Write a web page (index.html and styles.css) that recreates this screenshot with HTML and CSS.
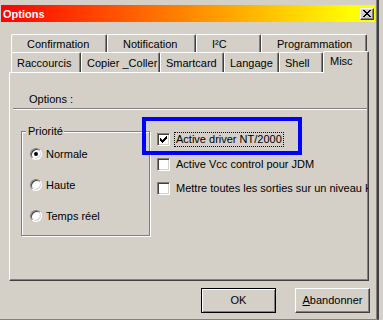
FILE: index.html
```html
<!DOCTYPE html>
<html>
<head>
<meta charset="utf-8">
<link rel="stylesheet" href="styles.css">
</head>
<body>
<div class="window">
  <div class="titlebar">
    <span class="title">Options</span>
    <span class="close">
      <svg width="8" height="7" viewBox="0 0 8 7" shape-rendering="crispEdges">
        <rect x="0" y="0" width="2" height="1"/><rect x="6" y="0" width="2" height="1"/>
        <rect x="1" y="1" width="2" height="1"/><rect x="5" y="1" width="2" height="1"/>
        <rect x="2" y="2" width="4" height="1"/>
        <rect x="3" y="3" width="2" height="1"/>
        <rect x="2" y="4" width="4" height="1"/>
        <rect x="1" y="5" width="2" height="1"/><rect x="5" y="5" width="2" height="1"/>
        <rect x="0" y="6" width="2" height="1"/><rect x="6" y="6" width="2" height="1"/>
      </svg>
    </span>
  </div>
  <div class="client">
    <div class="tabstrip">
      <div class="tabrow back">
        <div class="tab t-confirm">Confirmation</div>
        <div class="tab t-notif">Notification</div>
        <div class="tab t-i2c">I²C</div>
        <div class="tab t-prog">Programmation</div>
      </div>
      <div class="tabrow front">
        <div class="tab t-racc">Raccourcis</div>
        <div class="tab t-copier">Copier _Coller</div>
        <div class="tab t-smart">Smartcard</div>
        <div class="tab t-lang">Langage</div>
        <div class="tab t-shell">Shell</div>
        <div class="tab t-misc sel">Misc</div>
      </div>
    </div>
    <div class="panel">
      <div class="opt-label">Options :</div>
      <div class="sep"></div>
      <div class="pbody">
        <div class="group">
          <span class="legend">Priorité</span>
          <div class="radio"><span class="rb on"></span><span class="rtext">Normale</span></div>
          <div class="radio"><span class="rb"></span><span class="rtext">Haute</span></div>
          <div class="radio"><span class="rb"></span><span class="rtext">Temps réel</span></div>
        </div>
        <div class="checks">
          <div class="check">
            <span class="cb">
              <svg width="7" height="7" viewBox="0 0 7 7" shape-rendering="crispEdges">
                <rect x="6" y="0" width="1" height="1"/>
                <rect x="5" y="1" width="2" height="1"/>
                <rect x="0" y="2" width="1" height="1"/><rect x="4" y="2" width="3" height="1"/>
                <rect x="0" y="3" width="2" height="1"/><rect x="3" y="3" width="3" height="1"/>
                <rect x="0" y="4" width="5" height="1"/>
                <rect x="1" y="5" width="3" height="1"/>
                <rect x="2" y="6" width="1" height="1"/>
              </svg>
            </span>
            <span class="ctext focus">Active driver NT/2000</span>
          </div>
          <div class="check c2"><span class="cb"></span><span class="ctext">Active Vcc control pour JDM</span></div>
          <div class="check c3"><span class="cb"></span><span class="ctext">Mettre toutes les sorties sur un niveau H</span></div>
        </div>
      </div>
    </div>
    <div class="buttons">
      <div class="btn default">OK</div>
      <div class="btn"><u>A</u>bandonner</div>
    </div>
  </div>
  <div class="highlight"></div>
</div>
</body>
</html>
```

FILE: styles.css
```css
html, body {
  margin: 0;
  padding: 0;
}
body {
  background: #d4d0c8;
  font-family: "Liberation Sans", Arial, sans-serif;
  font-size: 11px;
  line-height: 13px;
  color: #000;
  width: 383px;
  height: 320px;
  overflow: hidden;
}
.window {
  position: relative;
  box-sizing: border-box;
  width: 379px;
  height: 320px;
  padding-top: 5px;
  border-right: 2px solid #404040;
  border-bottom: 1px solid #808080;
  box-shadow: inset -1px 0 0 #808080;
  background: #d4d0c8;
}
.titlebar {
  height: 17px;
  margin: 0 2px 0 1px;
  display: flex;
  align-items: center;
  justify-content: space-between;
  background: linear-gradient(90deg, #ff0000 0%, #ffff00 94%, #ffff00 100%);
}
.title {
  color: #fff;
  font-weight: bold;
  padding-left: 2px;
  padding-top: 1px;
}
.close {
  box-sizing: border-box;
  width: 14px;
  height: 12px;
  margin-right: 1px;
  background: #d4d0c8;
  border: 1px solid;
  border-color: #fff #404040 #404040 #fff;
  box-shadow: inset -1px -1px 0 #808080;
  display: flex;
  align-items: center;
  justify-content: center;
}
.close svg {
  fill: #000;
  display: block;
  margin-left: -1px;
}
.client {
  padding-left: 9px;
}
.tabstrip {
  margin-top: 12px;
  margin-left: 2px;
}
.tabrow {
  display: flex;
}
.tabrow.back {
  height: 17px;
}
.tabrow.front {
  height: 21px;
  align-items: flex-end;
}
.tab {
  box-sizing: border-box;
  flex: none;
  white-space: nowrap;
  background: #d4d0c8;
  border-top: 1px solid #fff;
  border-left: 1px solid #fff;
  border-right: 1px solid #404040;
  box-shadow: inset -1px 0 0 #808080;
  border-radius: 2px 2px 0 0;
}
.back .tab {
  height: 18px;
  padding: 3px 0 0 15px;
}
.front .tab {
  height: 20px;
  padding: 4px 0 0 5px;
}
.front .tab.sel {
  position: relative;
  z-index: 1;
  height: 22px;
  margin-bottom: -1px;
  padding: 3px 0 0 6px;
}
.t-confirm { width: 96px; }
.t-notif { width: 89px; }
.t-i2c { width: 65px; }
.t-prog { width: 106px; }
.t-racc { width: 70px; }
.t-copier { width: 79px; }
.t-smart { width: 64px; }
.t-lang { width: 55px; }
.t-shell { width: 44px; }
.t-misc { width: 46px; }

.panel {
  box-sizing: border-box;
  width: 360px;
  height: 209px;
  border-top: 1px solid #fff;
  border-left: 1px solid #fff;
  border-right: 1px solid #404040;
  border-bottom: 1px solid #404040;
  box-shadow: inset -1px -1px 0 #808080;
  overflow: hidden;
}
.opt-label {
  margin: 20px 0 0 19px;
}
.sep {
  margin: 2px 1px 0 3px;
  border-top: 1px solid #808080;
  border-bottom: 1px solid #fff;
}
.pbody {
  display: flex;
  align-items: flex-start;
}
.group {
  position: relative;
  box-sizing: border-box;
  flex: none;
  width: 129px;
  height: 105px;
  margin: 21px 0 0 11px;
  padding: 15px 0 0 8px;
  border: 1px solid #808080;
  box-shadow: inset 1px 1px 0 #fff, 1px 1px 0 #fff;
}
.legend {
  position: absolute;
  top: -7px;
  left: 4px;
  padding: 0 1px 0 2px;
  background: #d4d0c8;
}
.radio {
  display: flex;
  align-items: center;
  height: 14px;
}
.radio + .radio {
  margin-top: 17px;
}
.rb {
  position: relative;
  box-sizing: border-box;
  flex: none;
  width: 12px;
  height: 12px;
  border-radius: 50%;
  background: #fff;
  border: 1px solid;
  border-color: #808080 #fff #fff #808080;
  box-shadow: inset 1px 1px 0 #404040, inset -1px -1px 0 #d4d0c8;
}
.rb.on::after {
  content: "";
  position: absolute;
  left: 3px;
  top: 3px;
  width: 4px;
  height: 4px;
  border-radius: 50%;
  background: #000;
}
.rtext {
  margin-left: 4px;
}
.checks {
  flex: none;
  margin: 22px 0 0 7px;
}
.check {
  display: flex;
  align-items: center;
  height: 15px;
  white-space: nowrap;
}
.check.c2 {
  margin-top: 10px;
}
.check.c3 {
  margin-top: 9px;
}
.cb {
  box-sizing: border-box;
  flex: none;
  width: 13px;
  height: 13px;
  background: #fff;
  border: 1px solid;
  border-color: #808080 #fff #fff #808080;
  box-shadow: inset 1px 1px 0 #404040, inset -1px -1px 0 #d4d0c8;
  padding: 2px 0 0 2px;
}
.cb svg {
  display: block;
  fill: #000;
}
.ctext {
  margin-left: 4px;
  padding: 0 1px;
  border: 1px solid transparent;
}
.ctext.focus {
  border: 1px dotted #000;
}
.buttons {
  display: flex;
  justify-content: flex-end;
  gap: 19px;
  margin: 7px 7px 0 0;
}
.btn {
  box-sizing: border-box;
  width: 75px;
  height: 25px;
  display: flex;
  align-items: center;
  justify-content: center;
  border: 1px solid;
  border-color: #fff #404040 #404040 #fff;
  box-shadow: inset -1px -1px 0 #808080;
}
.btn.default {
  border-color: #000;
  box-shadow: inset 1px 1px 0 #fff, inset -1px -1px 0 #808080;
}
.highlight {
  position: absolute;
  left: 142px;
  top: 117px;
  width: 160px;
  height: 38px;
  box-sizing: border-box;
  border: 4px solid #0000ff;
}
```
